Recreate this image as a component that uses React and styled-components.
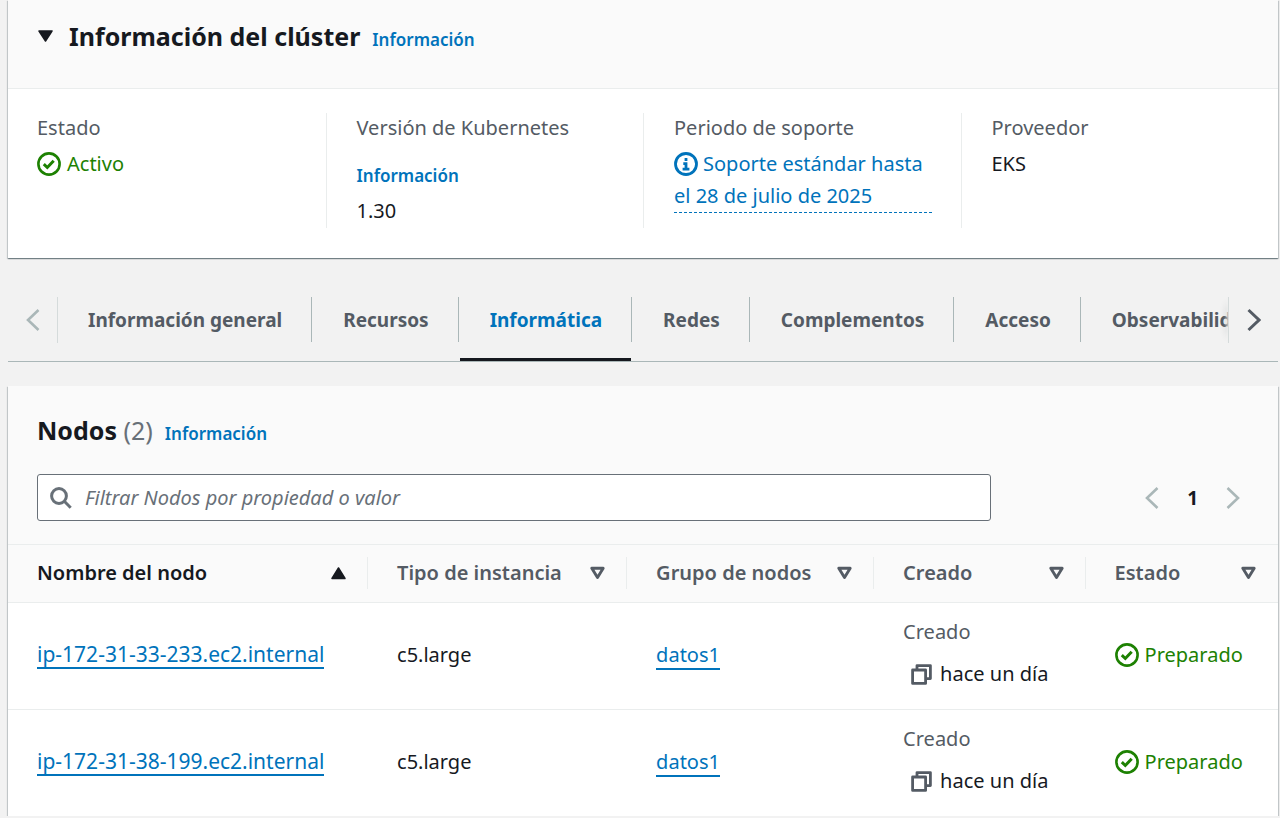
import React from "react";
import styled, { createGlobalStyle } from "styled-components";

const color = {
  page: "#f2f2f2",
  header: "#fafafa",
  line: "#eaeded",
  divider: "#aab7b8",
  text: "#16191f",
  secondary: "#545b64",
  muted: "#687078",
  link: "#0073bb",
  success: "#1d8102",
};

const GlobalStyle = createGlobalStyle`
  *, *::before, *::after { box-sizing: border-box; }
  body {
    margin: 0;
    background: ${color.page};
    color: ${color.text};
    font-family: "Noto Sans", "Open Sans", sans-serif;
    font-size: 20px;
    line-height: 32px;
  }
  h2, p, dl, dd { margin: 0; }
  a { color: ${color.link}; text-decoration: none; }
  button {
    font: inherit;
    color: inherit;
    background: none;
    border: 0;
    padding: 0;
    cursor: pointer;
  }
  svg { display: block; flex: none; }
`;

const Page = styled.main`
  padding: 0 2px 0 8px;
`;

const Panel = styled.section`
  background: #fff;
  box-shadow:
    0 1px 1px 0 rgba(0, 28, 36, 0.35),
    1px 1px 1px 0 rgba(0, 28, 36, 0.15),
    -1px 1px 1px 0 rgba(0, 28, 36, 0.15);
`;

const PanelHeader = styled.header`
  background: ${color.header};
  border-bottom: 1px solid ${color.line};
  padding: ${(p) => (p.$tall ? "27px 30px 23px 29px" : "19px 30px 35px 29px")};
`;

const TitleRow = styled.div`
  display: flex;
  align-items: baseline;
  gap: 12px;
`;

const Title = styled.h2`
  font-size: 25px;
  line-height: 34px;
  font-weight: 700;
`;

const Count = styled.span`
  font-weight: 400;
  color: ${color.muted};
`;

const Toggle = styled.button`
  display: flex;
  align-items: baseline;
  gap: 15px;
  font-weight: 700;
  svg { align-self: center; }
`;

const InfoLink = styled.a`
  font-size: 17px;
  line-height: 24px;
  font-weight: 600;
`;

const Details = styled.dl`
  display: grid;
  grid-template-columns: repeat(4, 1fr);
  padding: 24px 0 30px;
`;

const Detail = styled.div`
  min-height: 115px;
  padding: 0 29px 0 ${(p) => (p.$first ? 28 : 30)}px;
  border-left: 1px solid ${(p) => (p.$first ? "transparent" : color.line)};
`;

const Term = styled.dt`
  color: ${color.secondary};
  line-height: 30px;
  padding-bottom: 5px;
`;

const VersionLink = styled(InfoLink)`
  display: block;
  padding: 16px 0 7px;
`;

const Status = styled.span`
  display: flex;
  align-items: center;
  gap: 6px;
  color: ${color.success};
`;

const Support = styled.button`
  width: 100%;
  text-align: left;
  color: ${color.link};
  border-bottom: 1px dashed ${color.link};
  svg {
    display: inline-block;
    vertical-align: -5px;
    margin-right: 5px;
  }
`;

const Tabs = styled.nav`
  display: flex;
  margin: 39px 0 24px;
  border-bottom: 1px solid ${color.divider};
`;

const TabScroll = styled.button`
  flex: none;
  width: 50px;
  height: 46px;
  display: grid;
  place-items: center;
  color: ${(p) => (p.disabled ? color.divider : color.secondary)};
  border: 0 solid #d5dbdb;
  border-width: ${(p) => (p.$end ? "0 0 0 1px" : "0 1px 0 0")};
  box-shadow: ${(p) => (p.$end ? "-3px 0 4px -2px #f2f2f2, -8px 0 8px -8px rgba(0, 28, 36, 0.2)" : "none")};
  background: ${color.page};
  position: relative;
`;

const TabList = styled.div`
  flex: 1;
  min-width: 0;
  display: flex;
  overflow: hidden;
`;

const Tab = styled.button`
  flex: none;
  height: 64px;
  padding-bottom: 16px;
  border-bottom: 3px solid ${(p) => (p.$active ? color.text : "transparent")};
  color: ${(p) => (p.$active ? color.link : color.secondary)};
  font-size: 19px;
  font-weight: 700;
`;

const TabLabel = styled.span`
  display: block;
  padding: 7px 29px 6px 30px;
`;

const TabDivider = styled.span`
  flex: none;
  width: 1px;
  height: 45px;
  margin-right: 1px;
  background: ${color.divider};
`;

const FilterRow = styled.div`
  display: flex;
  align-items: center;
  justify-content: space-between;
  margin-top: 27px;
`;

const SearchBox = styled.label`
  flex: 0 0 78.8%;
  height: 47px;
  display: flex;
  align-items: center;
  gap: 13px;
  padding: 0 12px;
  background: #fff;
  border: 1px solid ${color.muted};
  border-radius: 3px;
  color: ${color.muted};
`;

const SearchInput = styled.input`
  flex: 1;
  min-width: 0;
  font: inherit;
  color: ${color.text};
  border: 0;
  padding: 0;
  outline: 0;
  background: transparent;
  &::placeholder {
    color: ${color.muted};
    font-style: italic;
    opacity: 1;
  }
`;

const Pagination = styled.div`
  display: flex;
  align-items: center;
  gap: 28px;
  padding-right: 8px;
  font-size: 19px;
  font-weight: 700;
  button:disabled { color: ${color.divider}; }
`;

const Table = styled.table`
  width: 100%;
  table-layout: fixed;
  border-collapse: collapse;
`;

const Col = styled.col`
  width: ${(p) => p.$share}%;
`;

const HeadCell = styled.th`
  height: 57px;
  padding: 0;
  text-align: left;
  background: ${color.header};
  border-bottom: 1px solid ${color.line};
  color: ${(p) => (p.$sorted ? color.text : color.secondary)};
`;

const SortButton = styled.button`
  width: 100%;
  display: flex;
  align-items: center;
  justify-content: space-between;
  padding: 0 20px 0 29px;
  border-right: 1px solid ${(p) => (p.$last ? "transparent" : color.line)};
  font-weight: 600;
  white-space: nowrap;
`;

const Cell = styled.td`
  height: 107px;
  padding: 0 0 1px 29px;
  white-space: nowrap;
  tr + tr > & { border-top: 1px solid ${color.line}; }
`;

const CellLink = styled.a`
  display: inline-block;
  font-size: ${(p) => (p.$primary ? 21 : 20)}px;
  line-height: 26px;
  border-bottom: 2px solid ${color.link};
`;

const CreatedLabel = styled.div`
  color: ${color.secondary};
  margin-bottom: 10px;
`;

const Created = styled.div`
  display: flex;
  align-items: center;
  gap: 8px;
  padding: 0 0 4px 8px;
`;

const CopyButton = styled.button`
  color: ${color.secondary};
`;

const CheckIcon = () => (
  <svg width="24" height="24" viewBox="0 0 24 24" fill="none" stroke="currentColor" strokeWidth="2.6">
    <circle cx="12" cy="12" r="10.6" />
    <path d="M6.8 12.2l3.5 3.3 6.4-6.7" strokeWidth="3" />
  </svg>
);

const InfoIcon = () => (
  <svg width="24" height="24" viewBox="0 0 24 24" fill="none" stroke="currentColor" strokeWidth="2.8">
    <circle cx="12" cy="12" r="10.5" />
    <path d="M12 6v3M9.3 11.6H12v5.6M8.6 17.2h6.8" strokeWidth="2.8" />
  </svg>
);

const Caret = ({ kind }) => (
  <svg width="17" height="14" viewBox="0 0 17 14" strokeLinejoin="round">
    {kind === "up" && <path d="M8.5 2L15 12.5H2z" fill="currentColor" stroke="currentColor" strokeWidth="1.5" />}
    {kind === "down" && <path d="M8.5 12L15 2H2z" fill="currentColor" stroke="currentColor" strokeWidth="1.5" />}
    {kind === "open" && <path d="M8.5 11.6L14.2 2.2H2.8z" fill="none" stroke="currentColor" strokeWidth="2.9" />}
  </svg>
);

const Chevron = ({ right, bold }) => (
  <svg width="14" height="24" viewBox="0 0 14 24" fill="none" stroke="currentColor" strokeWidth={bold ? 3 : 2.6}>
    <path d={right ? "M1.5 2l10.5 10L1.5 22" : "M12.5 2L2 12l10.5 10"} />
  </svg>
);

const SearchIcon = () => (
  <svg width="22" height="22" viewBox="0 0 22 22" fill="none" stroke="currentColor" strokeWidth="3">
    <circle cx="9" cy="9" r="7.4" />
    <path d="M14.3 14.3l6.4 6.4" />
  </svg>
);

const CopyIcon = () => (
  <svg width="21" height="21" viewBox="0 0 21 21" fill="none" stroke="currentColor" strokeWidth="2.8" strokeLinejoin="round">
    <path d="M1.6 6h13v13.4h-13z" />
    <path d="M6 6V1.6h13.4v13h-4.8" />
  </svg>
);

const tabs = ["Información general", "Recursos", "Informática", "Redes", "Complementos", "Acceso", "Observabilidad"];

const columns = [
  { label: "Nombre del nodo", share: 28.35, sorted: true },
  { label: "Tipo de instancia", share: 20.4 },
  { label: "Grupo de nodos", share: 19.45 },
  { label: "Creado", share: 16.65 },
  { label: "Estado", share: 15.15 },
];

const nodes = ["ip-172-31-33-233.ec2.internal", "ip-172-31-38-199.ec2.internal"];

export default function App() {
  return (
    <>
      <GlobalStyle />
      <Page>
        <Panel>
          <PanelHeader>
            <TitleRow>
              <Title>
                <Toggle type="button" aria-expanded="true">
                  <Caret kind="down" />
                  <span>Información del clúster</span>
                </Toggle>
              </Title>
              <InfoLink href="#cluster">Información</InfoLink>
            </TitleRow>
          </PanelHeader>
          <Details>
            <Detail $first>
              <Term>Estado</Term>
              <dd><Status><CheckIcon />Activo</Status></dd>
            </Detail>
            <Detail>
              <Term>Versión de Kubernetes</Term>
              <dd>
                <VersionLink href="#version">Información</VersionLink>
                1.30
              </dd>
            </Detail>
            <Detail>
              <Term>Periodo de soporte</Term>
              <dd>
                <Support type="button"><InfoIcon />Soporte estándar hasta el 28 de julio de 2025</Support>
              </dd>
            </Detail>
            <Detail>
              <Term>Proveedor</Term>
              <dd>EKS</dd>
            </Detail>
          </Details>
        </Panel>

        <Tabs>
          <TabScroll type="button" disabled aria-label="Anterior"><Chevron /></TabScroll>
          <TabList role="tablist">
            {tabs.map((name, i) => (
              <React.Fragment key={name}>
                {i > 0 && <TabDivider />}
                <Tab type="button" role="tab" aria-selected={i === 2} $active={i === 2}>
                  <TabLabel>{name}</TabLabel>
                </Tab>
              </React.Fragment>
            ))}
          </TabList>
          <TabScroll type="button" $end aria-label="Siguiente"><Chevron right bold /></TabScroll>
        </Tabs>

        <Panel>
          <PanelHeader $tall>
            <TitleRow>
              <Title>Nodos <Count>(2)</Count></Title>
              <InfoLink href="#nodes">Información</InfoLink>
            </TitleRow>
            <FilterRow>
              <SearchBox>
                <SearchIcon />
                <SearchInput type="text" aria-label="Filtrar nodos" placeholder="Filtrar Nodos por propiedad o valor" />
              </SearchBox>
              <Pagination>
                <button type="button" disabled aria-label="Página anterior"><Chevron /></button>
                <span>1</span>
                <button type="button" disabled aria-label="Página siguiente"><Chevron right /></button>
              </Pagination>
            </FilterRow>
          </PanelHeader>
          <Table>
            <colgroup>
              {columns.map((c) => <Col key={c.label} $share={c.share} />)}
            </colgroup>
            <thead>
              <tr>
                {columns.map((c, i) => (
                  <HeadCell key={c.label} scope="col" $sorted={c.sorted}>
                    <SortButton type="button" $last={i === columns.length - 1}>
                      {c.label}
                      <Caret kind={c.sorted ? "up" : "open"} />
                    </SortButton>
                  </HeadCell>
                ))}
              </tr>
            </thead>
            <tbody>
              {nodes.map((node) => (
                <tr key={node}>
                  <Cell><CellLink $primary href={`#${node}`}>{node}</CellLink></Cell>
                  <Cell>c5.large</Cell>
                  <Cell><CellLink href="#datos1">datos1</CellLink></Cell>
                  <Cell>
                    <CreatedLabel>Creado</CreatedLabel>
                    <Created>
                      <CopyButton type="button" aria-label="Copiar"><CopyIcon /></CopyButton>
                      hace un día
                    </Created>
                  </Cell>
                  <Cell><Status><CheckIcon />Preparado</Status></Cell>
                </tr>
              ))}
            </tbody>
          </Table>
        </Panel>
      </Page>
    </>
  );
}
